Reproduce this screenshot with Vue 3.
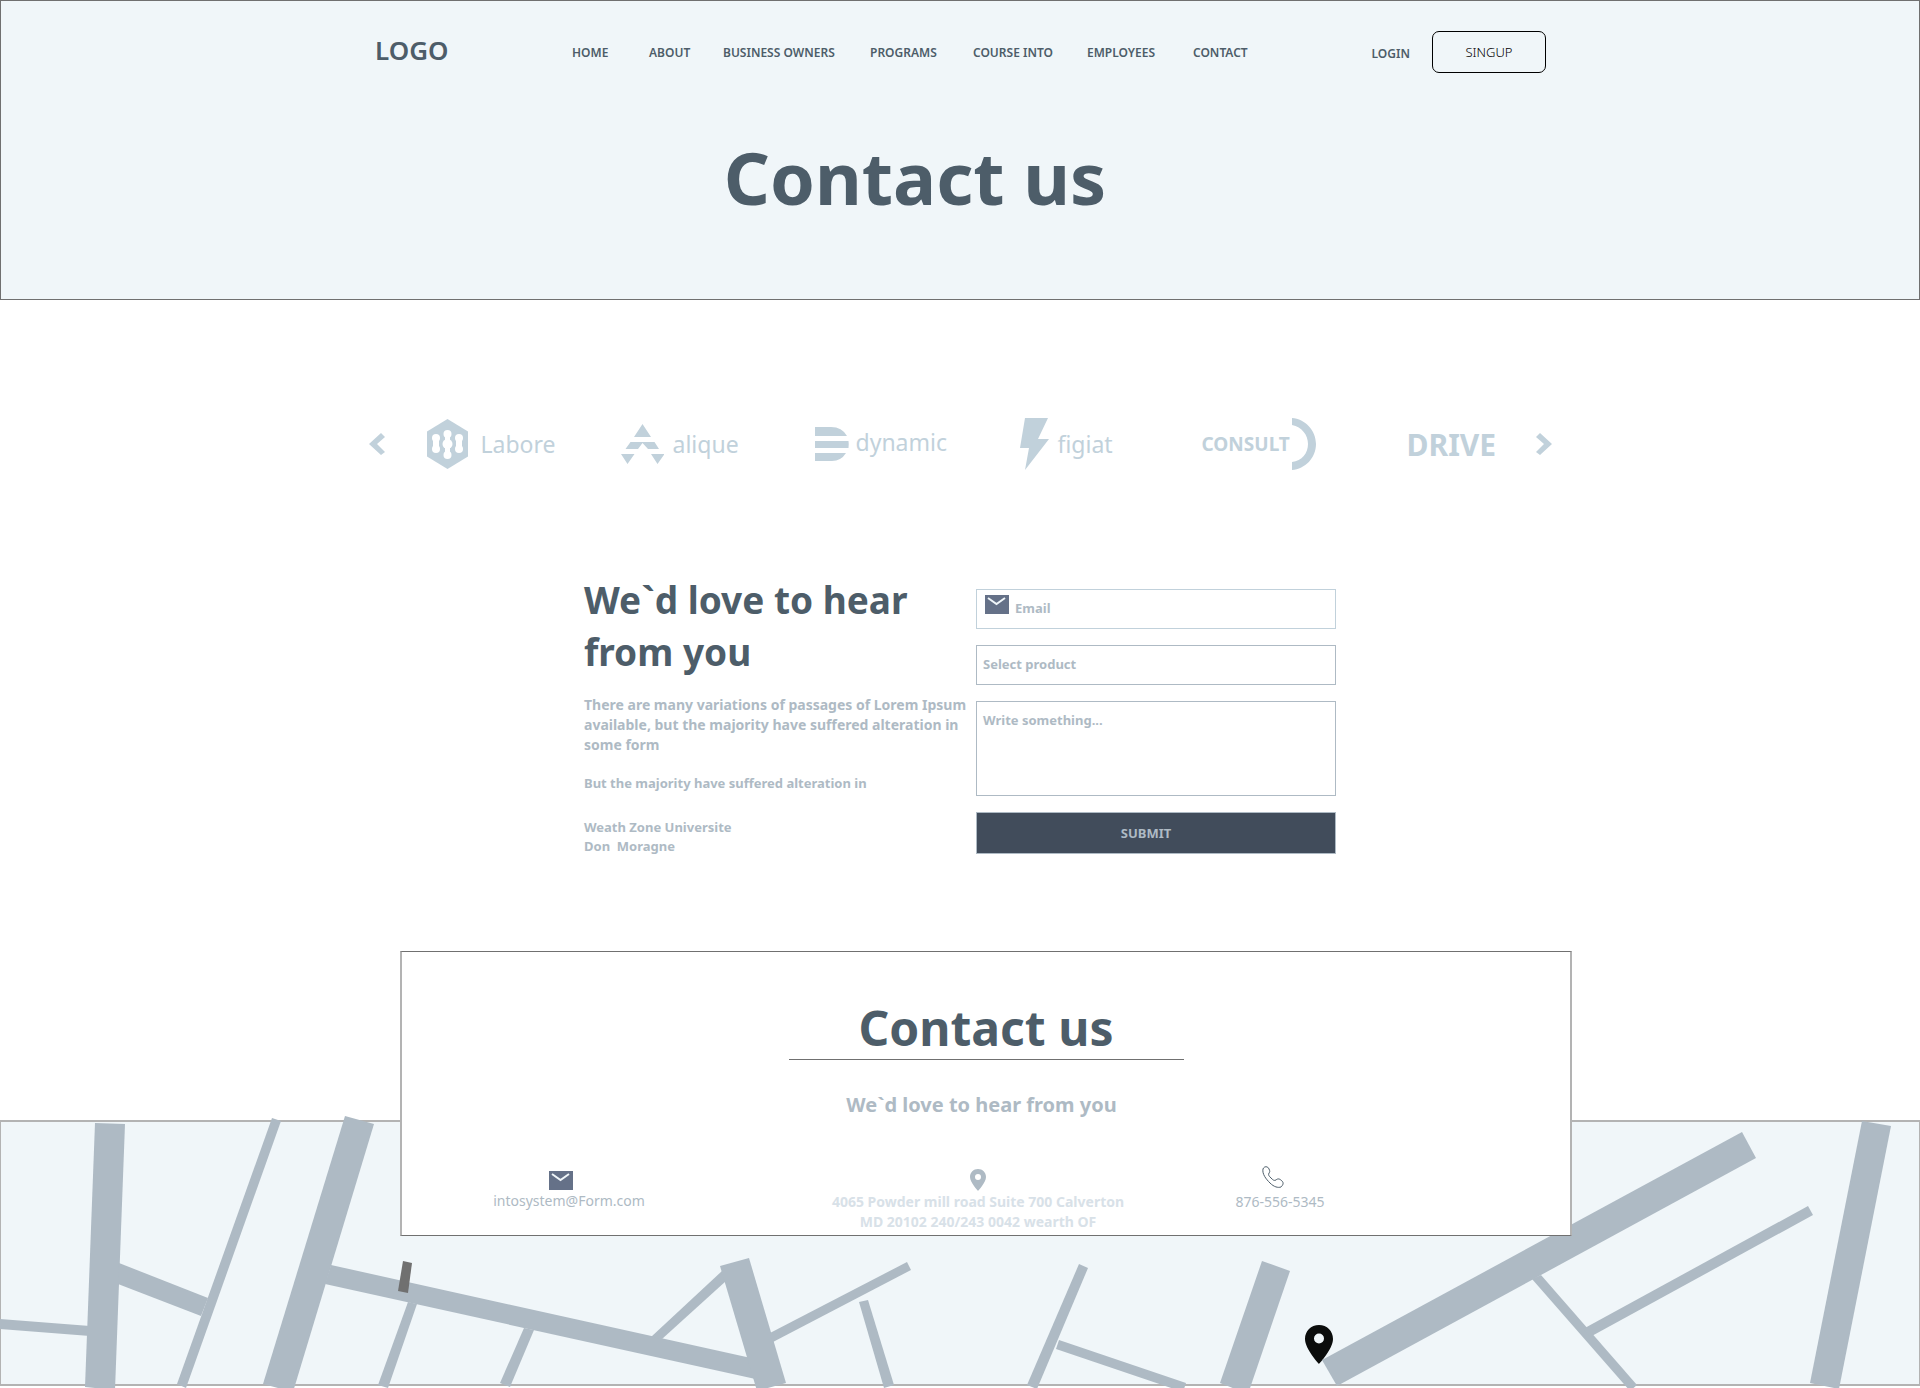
<script setup>
import { ref } from 'vue'

const navItems = ['HOME', 'ABOUT', 'BUSINESS OWNERS', 'PROGRAMS', 'COURSE INTO', 'EMPLOYEES', 'CONTACT']

const email = ref('')
const product = ref('')
const message = ref('')

const roads = [
  '95,1123 125,1124 115,1390 85,1387',
  '0,1319 90,1326 90,1336 0,1329',
  '119,1263 208,1298 201,1316 118,1284',
  '272,1118 281,1121 186,1388 177,1384',
  '345,1116 374,1124 293,1392 263,1384',
  '331,1265 760,1360 760,1380 325,1284',
  '408,1302 417,1304 388,1388 378,1385',
  '524,1328 534,1330 510,1387 500,1383',
  '651,1337 722,1271 726,1281 662,1339',
  '720,1266 749,1258 786,1383 757,1391',
  '770,1333 907,1262 911,1270 773,1342',
  '859,1302 868,1300 894,1385 884,1388',
  '1079,1264 1088,1268 1037,1389 1027,1385',
  '1059,1340 1186,1383 1183,1392 1056,1349',
  '1262,1261 1290,1271 1248,1394 1220,1383',
  '1322,1360 1742,1132 1756,1158 1337,1386',
  '1532,1279 1541,1275 1637,1385 1630,1391',
  '1583,1329 1808,1206 1813,1215 1590,1337',
  '1862,1121 1891,1126 1839,1389 1810,1383',
]
</script>

<template>
  <div class="page">
    <header class="hero">
      <div class="topbar">
        <a class="brand" href="#">LOGO</a>
        <nav class="menu">
          <a v-for="item in navItems" :key="item" href="#">{{ item }}</a>
        </nav>
        <a class="login" href="#">LOGIN</a>
        <button class="signup" type="button">SINGUP</button>
      </div>
      <h1>Contact us</h1>
    </header>

    <section class="partners">
      <button class="arrow" type="button" aria-label="Previous">
        <svg width="16" height="22" viewBox="0 0 16 22"><path d="M12 0 16 4 8 11 16 19 12 22 0 11Z" /></svg>
      </button>
      <div class="partner">
        <svg width="41" height="50" viewBox="0 0 41 50">
          <path d="M20.500 0 41 12.500V37.500L20.500 50 0 37.500V12.500Z" />
          <g class="cut">
            <circle cx="9" cy="19" r="4" /><circle cx="9" cy="30" r="4" /><rect x="6" y="19" width="6" height="11" />
            <circle cx="20.500" cy="15" r="4" /><circle cx="20.500" cy="25" r="5" /><circle cx="20.500" cy="36" r="4" /><rect x="18" y="15" width="5" height="21" />
            <circle cx="32" cy="19" r="4" /><circle cx="32" cy="30" r="4" /><rect x="29" y="19" width="6" height="11" />
          </g>
        </svg>
        <span class="name labore">Labore</span>
      </div>
      <div class="partner">
        <svg width="43" height="40" viewBox="0 0 43 40">
          <path d="M21.500 0 30 13H13ZM9.500 18H33.500L38 25H27L21.500 19 17 25H4.500ZM0 30H13.500L6.500 40ZM30 30H43.500L36.500 40Z" />
        </svg>
        <span class="name">alique</span>
      </div>
      <div class="partner">
        <svg width="34" height="34" viewBox="0 0 34 34">
          <path d="M0 0H16Q27 0 32 9H0ZM0 14H33.500Q34 17 33.500 21H0ZM0 26H31Q26 34 17 34H0Z" />
        </svg>
        <span class="name dynamic">dynamic</span>
      </div>
      <div class="partner">
        <svg width="29" height="52" viewBox="0 0 29 52"><path d="M5 0H28L18 21H29L5 52 9 30H0Z" /></svg>
        <span class="name">figiat</span>
      </div>
      <div class="partner">
        <span class="name consult">CONSULT</span>
        <svg width="24" height="52" viewBox="0 0 24 52"><path d="M0 0C13 1 24 12 24 26S13 51 0 52V44C10 43 16 35 16 26S10 9 0 7Z" /></svg>
      </div>
      <div class="partner"><span class="name drive">DRIVE</span></div>
      <button class="arrow" type="button" aria-label="Next">
        <svg width="16" height="22" viewBox="0 0 16 22"><path d="M4 0 0 4 8 11 0 19 4 22 16 11Z" /></svg>
      </button>
    </section>

    <section class="reach">
      <div class="intro">
        <h2>We`d love to hear from you</h2>
        <p class="lead">There are many variations of passages of Lorem Ipsum available, but the majority have suffered alteration in some form</p>
        <p class="note">But the majority have suffered alteration in</p>
        <p class="sign">Weath Zone Universite<br />Don&nbsp; Moragne</p>
      </div>
      <form class="form" @submit.prevent>
        <label class="field email">
          <svg width="24" height="19" viewBox="0 0 24 19"><rect width="24" height="19" fill="#657188" /><path d="M3 3 11.500 9 20 3" fill="none" stroke="#f0f6f9" stroke-width="2" /></svg>
          <input v-model="email" type="email" placeholder="Email" aria-label="Email" />
        </label>
        <select v-model="product" class="field select" aria-label="Select product">
          <option value="">Select product</option>
        </select>
        <textarea v-model="message" class="field message" placeholder="Write something..." aria-label="Message"></textarea>
        <button class="submit" type="submit">SUBMIT</button>
      </form>
    </section>

    <footer class="footer">
      <div class="card">
        <h2>Contact us</h2>
        <p class="tagline">We`d love to hear from you</p>
        <div class="ways">
          <a class="way mail" href="mailto:intosystem@Form.com">
            <svg width="24" height="19" viewBox="0 0 24 19"><rect width="24" height="19" fill="#657188" /><path d="M3 3 11.500 9 20 3" fill="none" stroke="#f0f6f9" stroke-width="2" /></svg>
            intosystem@Form.com
          </a>
          <address class="way place">
            <svg width="16" height="22" viewBox="0 0 16 22"><path fill="#aebac4" fill-rule="evenodd" d="M8 0C3.500 0 0 3.500 0 8c0 5.500 8 14 8 14s8-8.500 8-14c0-4.500-3.500-8-8-8Zm0 5a3 3 0 1 1 0 6 3 3 0 0 1 0-6Z" /></svg>
            4065 Powder mill road Suite 700 Calverton<br />MD 20102 240/243 0042 wearth OF
          </address>
          <a class="way phone" href="tel:8765565345">
            <svg width="22" height="22" viewBox="0 0 22 22"><path fill="none" stroke="#4d5d69" d="M1 3C2 0 6 0 7 3c1 2 1 3 0 4-1 2 0 3 2 5s3 3 5 2c2-2 4-1 6 1 2 2 1 4-1 6-3 1-7 0-11-4S0 8 1 3Z" /></svg>
            876-556-5345
          </a>
        </div>
      </div>
      <div class="map">
        <svg viewBox="0 1112 1920 276" preserveAspectRatio="xMidYMin slice">
          <path class="pin" fill-rule="evenodd" d="M1319 1325c-8 0-14 6-14 14 0 10 14 25 14 25s14-15 14-25c0-8-6-14-14-14Zm0 8.500a5 5 0 1 1 0 10 5 5 0 0 1 0-10Z" />
          <polygon v-for="points in roads" :key="points" :points="points" />
          <polygon class="marker" points="403,1261 412,1263 408,1293 398,1291" />
        </svg>
      </div>
    </footer>
  </div>
</template>

<style>
body {
  margin: 0;
  background: #fff;
}
</style>

<style scoped>
.page {
  overflow: hidden;
  font-family: "Noto Sans", "Open Sans", sans-serif;
  color: #4d5d69;
}
.page * {
  box-sizing: border-box;
}
h1, h2, p {
  margin: 0;
}
a {
  color: inherit;
  text-decoration: none;
}
button, input, select, textarea {
  font-family: inherit;
}
svg {
  flex: none;
  display: block;
}

.hero {
  min-height: 300px;
  padding-top: 30px;
  border: 1px solid #707070;
  background: #f0f6f9;
}
.topbar {
  display: flex;
  align-items: center;
  max-width: 1172px;
  height: 42px;
  padding-left: 1px;
  margin: 0 auto;
}
.brand {
  width: 197px;
  padding-bottom: 4px;
  font-size: 26px;
  line-height: 36px;
  font-weight: 600;
}
.menu {
  display: grid;
  grid-template-columns: 77px 74px 147px 103px 114px 106px auto;
  flex: 1;
  white-space: nowrap;
  font-size: 12px;
  font-weight: 600;
}
.login {
  padding-top: 2px;
  margin-right: 22px;
  font-size: 12px;
  font-weight: 600;
}
.signup {
  width: 114px;
  height: 42px;
  border: 1px solid #000;
  border-radius: 7px;
  background: transparent;
  color: #000;
  font-size: 13px;
  font-weight: 300;
}
.hero h1 {
  padding-right: 90px;
  margin-top: 52px;
  text-align: center;
  font-size: 72px;
  line-height: 104px;
}

.partners {
  display: grid;
  grid-template-columns: 58px 194px 194px 205px 182px 205px 129px 16px;
  align-items: center;
  justify-content: center;
  height: 54px;
  margin-top: 117px;
  color: #c1d1db;
  fill: #c1d1db;
}
.arrow {
  width: 16px;
  padding: 0;
  border: 0;
  background: none;
  fill: inherit;
}
.partner {
  display: flex;
  align-items: center;
  gap: 9px;
  font-size: 23px;
}
.labore {
  margin-left: 4px;
}
.dynamic {
  padding-bottom: 4px;
  margin-left: -2px;
}
.cut {
  fill: #fff;
}
.consult {
  margin-right: -7px;
  font-size: 19px;
  font-weight: 700;
}
.drive {
  font-size: 30px;
  font-weight: 700;
}

.reach {
  display: grid;
  grid-template-columns: 392px 360px;
  justify-content: center;
  margin-top: 102px;
  color: #aebac4;
  font-weight: 700;
}
.intro h2 {
  padding-top: 1px;
  color: #4d5d69;
  font-size: 37px;
  line-height: 52px;
}
.lead {
  margin-top: 17px;
  font-size: 14px;
  line-height: 20px;
}
.note, .sign {
  font-size: 13px;
  line-height: 19px;
}
.note {
  margin-top: 19px;
}
.sign {
  margin-top: 25px;
}
.form {
  display: flex;
  flex-direction: column;
  gap: 16px;
  padding-top: 16px;
}
.field {
  width: 100%;
  height: 40px;
  padding: 0 6px;
  border: 1px solid #aebac4;
  border-radius: 0;
  background: #fff;
  color: #aebac4;
  font-size: 13px;
  font-weight: 700;
}
.email {
  display: flex;
  align-items: flex-start;
  gap: 6px;
  padding: 5px 8px;
  border-color: #c1d1db;
}
.email input {
  flex: 1;
  min-width: 0;
  height: 26px;
  padding: 0;
  border: 0;
  outline: 0;
  background: none;
  color: inherit;
  font-size: 13px;
  font-weight: 700;
}
::placeholder {
  color: #aebac4;
  opacity: 1;
}
.select {
  appearance: none;
  padding-bottom: 2px;
}
.message {
  height: 95px;
  padding-top: 9px;
  resize: none;
}
.submit {
  height: 42px;
  padding: 0 20px 0 0;
  border: 1px solid #aebac4;
  background: #414c5b;
  color: #aebac4;
  font-size: 13px;
  font-weight: 700;
}

.footer {
  padding-bottom: 2px;
  margin-top: 95px;
}
.card {
  position: relative;
  z-index: 1;
  left: 26px;
  max-width: 1172px;
  height: 285px;
  margin: 0 auto -116px;
  padding-top: 45px;
  border: solid #707070;
  border-width: 1px 2px;
  border-left-color: #b3b3b3;
  border-right-color: #b3b3b3;
  background: #fff;
  text-align: center;
}
.card h2 {
  width: 395px;
  margin: 0 auto;
  border-bottom: 1px solid #707070;
  font-size: 48px;
  line-height: 62px;
}
.tagline {
  padding-right: 9px;
  margin-top: 30px;
  color: #aebac4;
  font-size: 20px;
  line-height: 30px;
  font-weight: 700;
}
.ways {
  display: grid;
  grid-template-columns: 334px 484px 120px;
  margin-top: 46px;
  color: #aebac4;
  font-size: 14px;
  line-height: 20px;
}
.way {
  display: block;
  font-style: normal;
}
.mail svg {
  margin: 5px auto 1px 147px;
}
.place {
  color: #d8e1e8;
  font-weight: 700;
}
.place svg {
  margin: 3px auto 1px;
}
.phone svg {
  margin: 0 auto 4px 42px;
}
.map {
  height: 266px;
  border: solid #b3b3b3;
  border-width: 2px 1px;
  background: #f0f6f9;
}
.map svg {
  position: relative;
  top: -10px;
  width: calc(100% + 2px);
  height: 276px;
  margin-left: -1px;
  fill: #aebac4;
}
.map .pin {
  fill: #0b0d0c;
}
.map .marker {
  fill: #707070;
}
</style>
